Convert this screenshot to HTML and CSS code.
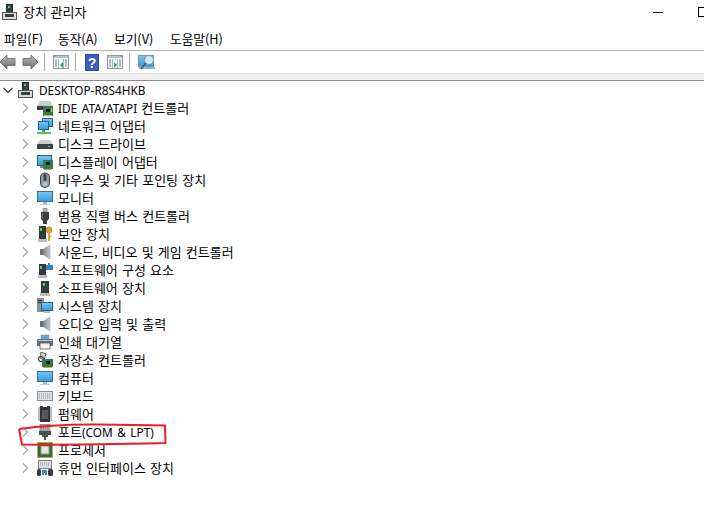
FILE: index.html
```html
<!DOCTYPE html>
<html lang="ko">
<head>
<meta charset="utf-8">
<title>장치 관리자</title>
<link rel="stylesheet" href="styles.css">
</head>
<body>
<svg class="defs" width="0" height="0">
  <defs>
    <linearGradient id="scr" x1="0" y1="0" x2="0" y2="1"><stop offset="0" stop-color="#7cc8f0"/><stop offset="1" stop-color="#2f9be0"/></linearGradient>
    <linearGradient id="spk" x1="0" y1="0" x2="1" y2="0"><stop offset="0" stop-color="#666c70"/><stop offset="1" stop-color="#c8cccf"/></linearGradient>
    <linearGradient id="arrow" x1="0" y1="0" x2="0" y2="1"><stop offset="0" stop-color="#bdbdbd"/><stop offset="1" stop-color="#6a6a6a"/></linearGradient>
    <symbol id="pc" viewBox="0 0 16 16"><rect x="4.500" y="0.500" width="6" height="8" fill="#3a3f42" stroke="#2a2a2a"/><rect x="6" y="2" width="2" height="2" fill="#4fe04f"/><rect x="0.500" y="8.500" width="14" height="7" fill="#dcdcdc" stroke="#555"/><rect x="3" y="10" width="9" height="3" fill="#3a3f42"/></symbol>
    <symbol id="ide" viewBox="0 0 16 16"><path d="M3 1h10l3 5v3H0V6z" fill="#c9cdd0"/><rect x="0" y="6" width="16" height="4" fill="#3d4043"/><rect x="6" y="6" width="10" height="10" fill="#2e7d4f"/><rect x="7" y="15" width="8" height="1" fill="#e0a030"/><rect x="9" y="9" width="4" height="3" fill="#113"/><rect x="14" y="8" width="1" height="4" fill="#d8d040"/></symbol>
    <symbol id="net" viewBox="0 0 16 16"><rect x="5.500" y="0.500" width="10" height="8" fill="url(#scr)" stroke="#26608c"/><rect x="1.500" y="3.500" width="10" height="8" fill="url(#scr)" stroke="#26608c"/><rect x="5" y="12" width="3" height="2" fill="#4caf50"/><rect x="0" y="14" width="14" height="2" fill="#57c05a"/></symbol>
    <symbol id="disk" viewBox="0 0 16 16"><path d="M3 4h10l3 4v1H0V8z" fill="#c9cdd0"/><rect x="0" y="8" width="16" height="5" rx="1" fill="#3d4043"/><rect x="11" y="10" width="2" height="1" fill="#5fe05f"/></symbol>
    <symbol id="disp" viewBox="0 0 16 16"><rect x="0.500" y="1.500" width="14" height="10" fill="url(#scr)" stroke="#26608c"/><rect x="6" y="6" width="10" height="9" fill="#2e7d4f"/><rect x="7" y="15" width="8" height="1" fill="#e0a030"/><rect x="9" y="8" width="4" height="3" fill="#113"/><rect x="3" y="12" width="3" height="2" fill="#889"/></symbol>
    <symbol id="mouse" viewBox="0 0 16 16"><rect x="3" y="0.500" width="10" height="15.500" rx="5" fill="#3a3f46"/><rect x="4" y="1.500" width="8" height="13.500" rx="4" fill="#929dab"/><rect x="6.500" y="2" width="3" height="7" rx="1.500" fill="#3f444c"/><rect x="5.500" y="10" width="5" height="4" rx="2" fill="#b6bec8"/></symbol>
    <symbol id="mon" viewBox="0 0 16 16"><rect x="0.500" y="1.500" width="15" height="10" fill="url(#scr)" stroke="#3b6f96"/><rect x="6" y="12" width="4" height="2" fill="#a9b5bd"/><rect x="3" y="14" width="10" height="1" fill="#c5ced4"/></symbol>
    <symbol id="usb" viewBox="0 0 16 16"><rect x="6" y="0" width="4" height="4" fill="#b5b5b5" stroke="#555" stroke-width=".5"/><path d="M4 4h8v7l-2 2v3H6v-3l-2-2z" fill="#3b3b3b"/><rect x="5" y="5" width="1" height="5" fill="#777"/></symbol>
    <symbol id="sec" viewBox="0 0 16 16"><rect x="2" y="0" width="7" height="15" fill="#36393c"/><rect x="1" y="13" width="9" height="3" fill="#bbb"/><rect x="3" y="2" width="2" height="3" fill="#4fe04f"/><circle cx="12" cy="4" r="3" fill="#d6a53d" stroke="#94702a" stroke-width=".6"/><rect x="11" y="6" width="2" height="9" fill="#d6a53d"/><rect x="12.500" y="10" width="2" height="1.500" fill="#d6a53d"/></symbol>
    <symbol id="spk2" viewBox="0 0 16 16"><path d="M13.500 0v16L6.500 11H3V5h3.500z" fill="url(#spk)"/><path d="M3 5h3.500v6H3z" fill="#6a7074"/></symbol>
    <symbol id="comp" viewBox="0 0 16 16"><rect x="2" y="2" width="7" height="13" fill="#36393c"/><rect x="1" y="13" width="9" height="3" fill="#bbb"/><rect x="3" y="4" width="2" height="3" fill="#4fe04f"/><path d="M9 3h2V1h2v2h3v5H9z" fill="#2a86d0"/></symbol>
    <symbol id="soft" viewBox="0 0 16 16"><rect x="4" y="1" width="8" height="13" fill="#36393c"/><rect x="3" y="13" width="10" height="3" fill="#bbb"/><rect x="6" y="3" width="2" height="3" fill="#4fe04f"/></symbol>
    <symbol id="sys" viewBox="0 0 16 16"><rect x="0" y="0" width="7" height="14" fill="#8b9095"/><rect x="1" y="2" width="4" height="1" fill="#333"/><rect x="1" y="4" width="4" height="1" fill="#333"/><rect x="4.500" y="4.500" width="11" height="8" fill="url(#scr)" stroke="#26608c"/><rect x="7" y="13" width="6" height="2" fill="#a9b5bd"/></symbol>
    <symbol id="prn" viewBox="0 0 16 16"><rect x="4" y="1" width="8" height="4" fill="#5aa9e0" stroke="#888" stroke-width=".5"/><rect x="0" y="5" width="16" height="7" fill="#6d7276"/><rect x="1" y="6" width="14" height="1" fill="#bbb"/><rect x="3" y="9" width="10" height="6" fill="#f4f4f4" stroke="#444" stroke-width=".7"/></symbol>
    <symbol id="stor" viewBox="0 0 16 16"><path d="M4 0l5 2-2 6-4-2z" fill="#dcdcdc" stroke="#333" stroke-width=".8"/><circle cx="4" cy="7" r="2.500" fill="none" stroke="#333" stroke-width="1.200"/><rect x="5" y="7" width="11" height="8" fill="#2e7d4f"/><rect x="6" y="15" width="9" height="1" fill="#e0a030"/><rect x="9" y="9" width="4" height="3" fill="#113"/></symbol>
    <symbol id="key" viewBox="0 0 16 16"><rect x="0.500" y="3.500" width="15" height="9" fill="#dfe2e4" stroke="#8b9095"/><path d="M2 6h12M2 8h12M2 10h12" stroke="#8e949a" stroke-dasharray="1 1"/></symbol>
    <symbol id="firm" viewBox="0 0 16 16"><path d="M3 0h3v1h4V0h3v16H3z" fill="#33363a"/><path d="M1 2h2M1 4h2M1 6h2M1 8h2M1 10h2M1 12h2M1 14h2M13 2h2M13 4h2M13 6h2M13 8h2M13 10h2M13 12h2M13 14h2" stroke="#777"/><rect x="5" y="4" width="6" height="9" fill="#55595c"/></symbol>
    <symbol id="port" viewBox="0 0 16 16"><rect x="3" y="0" width="10" height="7" fill="#a9adb0" stroke="#666" stroke-width=".5"/><path d="M4 2h8M4 4h8" stroke="#6a6e70" stroke-dasharray="1 1"/><path d="M2 7h12v4h-3v2H9v3H7v-3H5v-2H2z" fill="#4c4f52"/></symbol>
    <symbol id="cpu" viewBox="0 0 16 16"><rect x="0.500" y="0.500" width="15" height="15" fill="#2f6b3f" stroke="#c8a83c"/><rect x="1" y="1" width="14" height="14" fill="#2f6b3f"/><rect x="4" y="4" width="8" height="8" fill="#e4e6e0" stroke="#8b9a84"/></symbol>
    <symbol id="hid" viewBox="0 0 16 16"><rect x="1.500" y="0.500" width="13" height="8" fill="#dfe2e4" stroke="#7b8085"/><path d="M3 3h10M3 5h10" stroke="#8a9095" stroke-dasharray="1 1"/><rect x="0" y="9" width="4" height="7" rx="1.500" fill="#3a3d40"/><rect x="11" y="9" width="5" height="7" rx="1.500" fill="#3a3d40"/><path d="M5 10h5v5H8V13H7v2H5z" fill="#2a86d0"/></symbol>
    <symbol id="chev" viewBox="0 0 10 10"><path d="M3 0.500l4.500 4.500-4.500 4.500" fill="none" stroke="#a6a6a6" stroke-width="1.400"/></symbol>
    <symbol id="chevd" viewBox="0 0 10 10"><path d="M0.500 3l4.500 4.500 4.500-4.500" fill="none" stroke="#404040" stroke-width="1.400"/></symbol>
    <symbol id="panel" viewBox="0 0 16 16"><rect x="0.500" y="1.500" width="15" height="13" fill="#f4f7f8" stroke="#8f9aa0"/><rect x="1" y="2" width="14" height="2" fill="#b7c4cc"/><path d="M2 6h2M2 8h2M2 10h2M2 12h2M12 6h2M12 8h2M12 10h2M12 12h2" stroke="#6b8a9a"/><path d="M5.500 5v9M10.500 5v9" stroke="#a9b5bd"/></symbol>
  </defs>
</svg>

<header class="titlebar">
  <svg class="title-icon"><use href="#pc"/></svg>
  <span class="title-text">장치 관리자</span>
  <span class="win-min"></span>
  <span class="win-max"></span>
</header>

<nav class="menubar">
  <span class="menu m1">파일(F)</span>
  <span class="menu m2">동작(A)</span>
  <span class="menu m3">보기(V)</span>
  <span class="menu">도움말(H)</span>
</nav>

<div class="toolbar">
  <svg class="tb-arrow" viewBox="0 0 16 14" preserveAspectRatio="none"><path d="M0 7l7-6v3h8v6H7v3z" fill="url(#arrow)" stroke="#666" stroke-width=".8"/></svg>
  <svg class="tb-arrow tb-next" viewBox="0 0 16 14" preserveAspectRatio="none"><path d="M16 7L9 1v3H1v6h8v3z" fill="url(#arrow)" stroke="#666" stroke-width=".8"/></svg>
  <i class="sep s1"></i>
  <svg class="tb-icon"><use href="#panel"/><path d="M10 8v6l-3-3z" fill="#2fa84f"/></svg>
  <i class="sep s2"></i>
  <svg class="tb-help" viewBox="0 0 14 17"><rect width="14" height="17" fill="#2a48a8"/><rect x="1" y="1" width="12" height="15" fill="#3c5cc0"/><text x="7" y="13.500" class="help-mark">?</text></svg>
  <svg class="tb-icon tb-i3"><use href="#panel"/><path d="M7 8v6l3-3z" fill="#2fa84f"/></svg>
  <i class="sep s3"></i>
  <svg class="tb-icon tb-i4" viewBox="0 0 18 17"><rect x="0.500" y="1.500" width="15" height="11" fill="url(#scr)" stroke="#6a9cbc"/><rect x="1" y="13" width="16" height="2" fill="#8fb4cc"/><circle cx="11" cy="6" r="4.500" fill="#cfeaf8" stroke="#7f959f"/><path d="M8 9l-5 6" stroke="#555" stroke-width="1.500"/></svg>
</div>
<div class="band"></div>

<main class="tree">
  <div class="row root"><svg class="chev"><use href="#chevd"/></svg><svg class="ico"><use href="#pc"/></svg><span class="label en">DESKTOP-R8S4HKB</span></div>
  <div class="row"><svg class="chev"><use href="#chev"/></svg><svg class="ico"><use href="#ide"/></svg><span class="label"><span class="en">IDE ATA/ATAPI</span> 컨트롤러</span></div>
  <div class="row"><svg class="chev"><use href="#chev"/></svg><svg class="ico"><use href="#net"/></svg><span class="label">네트워크 어댑터</span></div>
  <div class="row"><svg class="chev"><use href="#chev"/></svg><svg class="ico"><use href="#disk"/></svg><span class="label">디스크 드라이브</span></div>
  <div class="row"><svg class="chev"><use href="#chev"/></svg><svg class="ico"><use href="#disp"/></svg><span class="label">디스플레이 어댑터</span></div>
  <div class="row"><svg class="chev"><use href="#chev"/></svg><svg class="ico"><use href="#mouse"/></svg><span class="label">마우스 및 기타 포인팅 장치</span></div>
  <div class="row"><svg class="chev"><use href="#chev"/></svg><svg class="ico"><use href="#mon"/></svg><span class="label">모니터</span></div>
  <div class="row"><svg class="chev"><use href="#chev"/></svg><svg class="ico"><use href="#usb"/></svg><span class="label">범용 직렬 버스 컨트롤러</span></div>
  <div class="row"><svg class="chev"><use href="#chev"/></svg><svg class="ico"><use href="#sec"/></svg><span class="label">보안 장치</span></div>
  <div class="row"><svg class="chev"><use href="#chev"/></svg><svg class="ico"><use href="#spk2"/></svg><span class="label">사운드, 비디오 및 게임 컨트롤러</span></div>
  <div class="row"><svg class="chev"><use href="#chev"/></svg><svg class="ico"><use href="#comp"/></svg><span class="label">소프트웨어 구성 요소</span></div>
  <div class="row"><svg class="chev"><use href="#chev"/></svg><svg class="ico"><use href="#soft"/></svg><span class="label">소프트웨어 장치</span></div>
  <div class="row"><svg class="chev"><use href="#chev"/></svg><svg class="ico"><use href="#sys"/></svg><span class="label">시스템 장치</span></div>
  <div class="row"><svg class="chev"><use href="#chev"/></svg><svg class="ico"><use href="#spk2"/></svg><span class="label">오디오 입력 및 출력</span></div>
  <div class="row"><svg class="chev"><use href="#chev"/></svg><svg class="ico"><use href="#prn"/></svg><span class="label">인쇄 대기열</span></div>
  <div class="row"><svg class="chev"><use href="#chev"/></svg><svg class="ico"><use href="#stor"/></svg><span class="label">저장소 컨트롤러</span></div>
  <div class="row"><svg class="chev"><use href="#chev"/></svg><svg class="ico"><use href="#mon"/></svg><span class="label">컴퓨터</span></div>
  <div class="row"><svg class="chev"><use href="#chev"/></svg><svg class="ico"><use href="#key"/></svg><span class="label">키보드</span></div>
  <div class="row"><svg class="chev"><use href="#chev"/></svg><svg class="ico"><use href="#firm"/></svg><span class="label">펌웨어</span></div>
  <div class="row"><svg class="chev"><use href="#chev"/></svg><svg class="ico"><use href="#port"/></svg><span class="label">포트<span class="en">(COM &amp; LPT)</span></span></div>
  <div class="row"><svg class="chev"><use href="#chev"/></svg><svg class="ico"><use href="#cpu"/></svg><span class="label">프로세서</span></div>
  <div class="row"><svg class="chev"><use href="#chev"/></svg><svg class="ico"><use href="#hid"/></svg><span class="label">휴먼 인터페이스 장치</span></div>
</main>

<svg class="mark" viewBox="0 0 704 523"><path d="M19 429C40 426 70 424 100 424.500L165 425.500L165.500 443C120 444 60 445 22 444.500L19 429" fill="none" stroke="#ee1c25" stroke-width="2"/></svg>
</body>
</html>
```

FILE: styles.css
```css
* { box-sizing: border-box; }
html, body { margin: 0; height: 100%; }
body {
  position: relative;
  width: 704px;
  height: 523px;
  overflow: hidden;
  background: #fff;
  color: #000;
  font-family: "Noto Sans CJK KR", "Noto Sans", sans-serif;
  font-size: 13px;
}
.defs { position: absolute; }
svg { display: block; flex: none; }

.titlebar { display: flex; align-items: center; height: 28px; padding: 0 0 4px 2px; }
.title-icon { width: 16px; height: 16px; }
.title-text { margin-left: 5px; line-height: 18px; padding-bottom: 1px; }
.win-min { width: 10px; height: 1px; background: #000; margin-left: auto; }
.win-max { width: 6px; height: 10px; border: 1px solid #000; border-right: 0; margin-left: 35px; }

.menubar { display: flex; align-items: center; height: 22px; padding-left: 4px; }
.menu { white-space: nowrap; line-height: 18px; padding-bottom: 1px; font-size: 12.7px; }
.m1 { width: 54px; }
.m2 { width: 56px; }
.m3 { width: 56px; }

.toolbar { display: flex; align-items: center; height: 24px; border-top: 1px solid #b4b4b4; border-bottom: 1px solid #dcdcdc; }
.tb-arrow { width: 16px; height: 16px; }
.tb-next { margin-left: 6px; }
.sep { display: block; width: 1px; height: 18px; background: #a8a8a8; }
.s1 { margin-left: 6px; }
.tb-icon { width: 16px; height: 16px; margin-left: 8px; }
.s2 { margin-left: 6px; }
.tb-help { width: 14px; height: 17px; margin-left: 9px; }
.help-mark { font-family: "Liberation Sans", sans-serif; font-size: 14px; font-weight: 700; fill: #fff; text-anchor: middle; }
.tb-i3 { margin-left: 8px; }
.s3 { margin-left: 6px; }
.tb-i4 { width: 18px; height: 17px; }

.band { height: 7px; background: #f0f0f0; border-bottom: 1px solid #8c8c8c; }

.tree { display: flex; flex-direction: column; }
.row { display: flex; align-items: center; height: 18px; padding-left: 20px; white-space: nowrap; }
.root { padding-left: 3px; }
.chev { width: 10px; height: 10px; }
.ico { width: 16px; height: 16px; margin-left: 7px; margin-right: 5px; }
.root .ico { margin-left: 5px; }
.label { line-height: 18px; padding-bottom: 1px; word-spacing: 0.5px; }
.en { font-family: "Noto Sans", sans-serif; font-size: 11.8px; word-spacing: 1.5px; }

.mark { position: absolute; left: 0; top: 0; width: 704px; height: 523px; pointer-events: none; }
```
